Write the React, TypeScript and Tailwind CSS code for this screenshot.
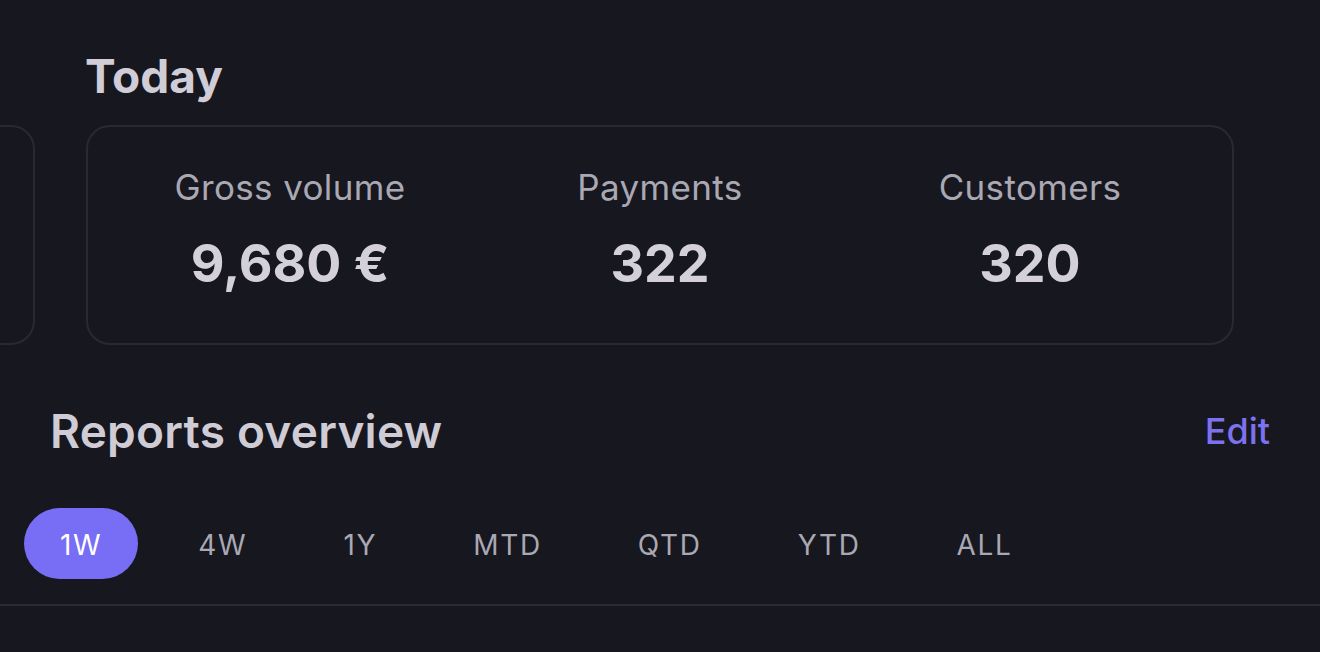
const stats = [
  { label: "Gross volume", value: "9,680 €" },
  { label: "Payments", value: "322" },
  { label: "Customers", value: "320" },
];

const ranges = ["1W", "4W", "1Y", "MTD", "QTD", "YTD", "ALL"];

export default function App() {
  return (
    <div className="w-[1320px] h-[652px] overflow-hidden bg-[#17171f] font-['Inter',sans-serif] antialiased">
      <h2 className="pl-[85px] pt-[48px] text-[46px] leading-[56px] font-bold text-[#d0cdd7]">Today</h2>

      <div className="mt-[21px] flex gap-[51px]">
        <div className="shrink-0 w-[200px] -ml-[165px] h-[220px] rounded-[24px] border-2 border-[#282a33]" />
        <div className="shrink-0 w-[1148px] h-[220px] rounded-[24px] border-2 border-[#282a33] px-[17px] pt-[40px] grid grid-cols-3">
          {stats.map((s) => (
            <div key={s.label} className="flex flex-col items-center">
              <p className="text-[35px] leading-[40px] tracking-[0.01em] text-[#a9a8b3]">{s.label}</p>
              <p className="mt-[27px] text-[52px] leading-[60px] font-bold text-[#d3d0db]">{s.value}</p>
            </div>
          ))}
        </div>
      </div>

      <div className="mt-[59px] flex items-center justify-between pl-[50px] pr-[50px]">
        <h2 className="text-[46px] leading-[54px] font-semibold tracking-[0.005em] text-[#cfccd6]">Reports overview</h2>
        <button className="text-[36px] leading-[44px] font-medium text-[#7c72f0]">Edit</button>
      </div>

      <div className="mt-[50px] flex gap-[24px] pl-[24px]">
        {ranges.map((r, i) => (
          <div
            key={r}
            className={
              i === 0
                ? "h-[71px] px-[36px] pt-[3px] flex items-center rounded-full bg-[#786ef5] text-white text-[28px] tracking-[0.06em]"
                : "h-[71px] px-[36px] pt-[3px] flex items-center text-[#a9a8b3] text-[28px] tracking-[0.06em]"
            }
          >
            {r}
          </div>
        ))}
      </div>

      <div className="mt-[25px] h-[2px] bg-[#2a2a31]" />
    </div>
  );
}
